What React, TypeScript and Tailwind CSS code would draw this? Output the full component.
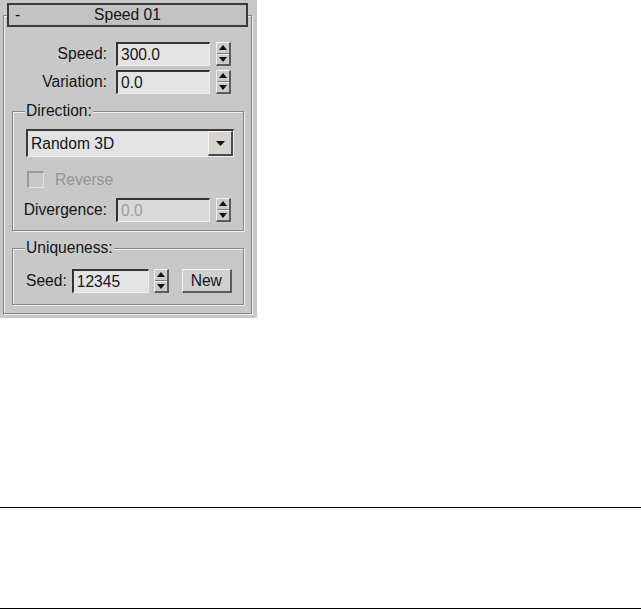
import React from "react";

function Tri({ down }: { down?: boolean }) {
  return (
    <svg width="8" height="5" viewBox="0 0 8 5" className="block">
      <path d={down ? "M0 0H8L4 5Z" : "M4 0L8 5H0Z"} fill="#111" />
    </svg>
  );
}

function Spinner() {
  return (
    <div className="flex h-[24px] w-[15px] flex-col border-t border-l border-t-[#f2f2f2] border-l-[#f2f2f2] border-r-2 border-b-2 border-r-[#5c5c5c] border-b-[#5c5c5c] bg-[#cbcbcb]">
      <div className="flex flex-1 items-center justify-center border-b border-b-[#7a7a7a]">
        <Tri />
      </div>
      <div className="flex flex-1 items-center justify-center border-t border-t-[#f2f2f2]">
        <Tri down />
      </div>
    </div>
  );
}

function Edit({ value, wide, disabled }: { value: string; wide?: boolean; disabled?: boolean }) {
  return (
    <div
      className={`flex h-[24px] items-center border-t-2 border-l-2 border-t-[#333333] border-l-[#333333] border-r border-b border-r-[#ededed] border-b-[#ededed] pl-[3px] leading-[18px] ${
        wide ? "w-[94px]" : "w-[77px]"
      } ${disabled ? "bg-[#d9d9d9] text-[#9c9c9c]" : "bg-[#e3e3e3] text-[#151515]"}`}
    >
      {value}
    </div>
  );
}

function Group({ label, children, className }: { label: string; children: React.ReactNode; className: string }) {
  return (
    <div
      className={`ml-[8px] w-[232px] border border-[#858585] shadow-[inset_1px_1px_0_#f0f0f0,1px_1px_0_#f0f0f0] ${className}`}
    >
      <div className="-mt-[10px] ml-[12px] h-[18px] w-fit bg-[#c8c8c8] px-[1px] leading-[18px] text-[#151515]">
        {label}
      </div>
      {children}
    </div>
  );
}

export default function App() {
  return (
    <div className="flex h-[609px] w-full flex-col bg-white font-['Liberation_Sans',Arial,sans-serif] text-[15.6px] text-[#151515]">
      <div className="h-[318px] w-[257px] bg-[#c8c8c8] pl-[3px] pt-[15px]">
        <div className="flex h-[299px] w-[249px] flex-col border border-[#858585] shadow-[inset_1px_1px_0_#f0f0f0,1px_1px_0_#f0f0f0]">
          {/* title bar */}
          <div className="-mt-[13px] ml-[3px] flex h-[24px] w-[241px] items-center border-2 border-[#3a3a3a] bg-[#c2c2c2] leading-[18px]">
            <span className="w-[20px] pl-[6px]">-</span>
            <span className="flex-1 text-center">Speed 01</span>
            <span className="w-[20px]" />
          </div>

          {/* Speed */}
          <div className="mt-[15px] flex h-[24px] items-center">
            <div className="w-[103px] text-right leading-[18px]">Speed:</div>
            <div className="ml-[9px]">
              <Edit value="300.0" wide />
            </div>
            <div className="ml-[6px]">
              <Spinner />
            </div>
          </div>

          {/* Variation */}
          <div className="mt-[4px] flex h-[24px] items-center">
            <div className="w-[103px] text-right leading-[18px]">Variation:</div>
            <div className="ml-[9px]">
              <Edit value="0.0" wide />
            </div>
            <div className="ml-[6px]">
              <Spinner />
            </div>
          </div>

          {/* Direction */}
          <Group label="Direction:" className="mt-[17px] pb-[8px]">
            <div className="ml-[13px] mt-[9px] flex h-[28px] w-[208px] items-stretch border-t-2 border-l-2 border-t-[#3a3a3a] border-l-[#3a3a3a] border-r border-b border-r-[#ededed] border-b-[#ededed] bg-[#e3e3e3]">
              <div className="flex flex-1 items-center pl-[3px] leading-[18px]">Random 3D</div>
              <div className="flex w-[25px] items-center justify-center border-t border-l border-t-[#f4f4f4] border-l-[#f4f4f4] border-r-2 border-b-2 border-r-[#4a4a4a] border-b-[#4a4a4a] bg-[#d7d4cf]">
                <svg width="9" height="5" viewBox="0 0 9 5" className="block">
                  <path d="M0 0H9L4.5 5Z" fill="#111" />
                </svg>
              </div>
            </div>

            <div className="ml-[14px] mt-[14px] flex h-[17px] items-center">
              <div className="h-[17px] w-[17px] border-t-2 border-l-2 border-t-[#9a9a9a] border-l-[#9a9a9a] border-r border-b border-r-[#e2e2e2] border-b-[#e2e2e2] bg-[#c8c8c8]" />
              <div className="ml-[11px] leading-[18px] text-[#939393]">Reverse</div>
            </div>

            <div className="mt-[10px] flex h-[24px] items-center">
              <div className="w-[94px] text-right leading-[18px]">Divergence:</div>
              <div className="ml-[9px]">
                <Edit value="0.0" wide disabled />
              </div>
              <div className="ml-[6px]">
                <Spinner />
              </div>
            </div>
          </Group>

          {/* Uniqueness */}
          <Group label="Uniqueness:" className="mt-[17px] pb-[11px]">
            <div className="ml-[13px] mt-[12px] flex h-[24px] items-center">
              <div className="leading-[18px]">Seed:</div>
              <div className="ml-[5px]">
                <Edit value="12345" />
              </div>
              <div className="ml-[5px]">
                <Spinner />
              </div>
              <div className="ml-[13px] flex h-[24px] w-[50px] items-center justify-center border-t border-l border-t-[#f2f2f2] border-l-[#f2f2f2] border-r-2 border-b-2 border-r-[#5c5c5c] border-b-[#5c5c5c] bg-[#d0d0d0] leading-[18px]">
                New
              </div>
            </div>
          </Group>
        </div>
      </div>

      <div className="mt-[189px] h-px w-full bg-black" />
      <div className="mt-[100px] h-px w-full bg-black" />
    </div>
  );
}
